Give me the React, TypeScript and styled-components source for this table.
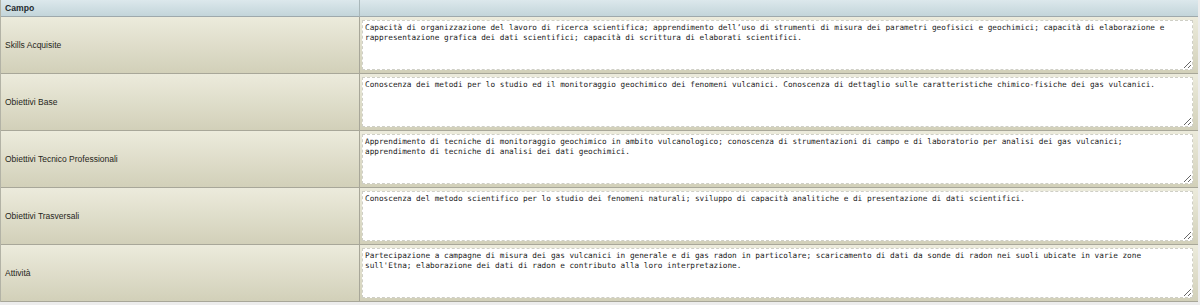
import styled, { createGlobalStyle } from "styled-components";

const GlobalStyle = createGlobalStyle`
  html, body {
    margin: 0;
    padding: 0;
    background: #ededed;
  }
`;

const righe = [
  {
    campo: "Skills Acquisite",
    testo:
      "Capacità di organizzazione del lavoro di ricerca scientifica; apprendimento dell’uso di strumenti di misura dei parametri geofisici e geochimici; capacità di elaborazione e rappresentazione grafica dei dati scientifici; capacità di scrittura di elaborati scientifici.",
  },
  {
    campo: "Obiettivi Base",
    testo:
      "Conoscenza dei metodi per lo studio ed il monitoraggio geochimico dei fenomeni vulcanici. Conoscenza di dettaglio sulle caratteristiche chimico-fisiche dei gas vulcanici.",
  },
  {
    campo: "Obiettivi Tecnico Professionali",
    testo:
      "Apprendimento di tecniche di monitoraggio geochimico in ambito vulcanologico; conoscenza di strumentazioni di campo e di laboratorio per analisi dei gas vulcanici; apprendimento di tecniche di analisi dei dati geochimici.",
  },
  {
    campo: "Obiettivi Trasversali",
    testo:
      "Conoscenza del metodo scientifico per lo studio dei fenomeni naturali; sviluppo di capacità analitiche e di presentazione di dati scientifici.",
  },
  {
    campo: "Attività",
    testo:
      "Partecipazione a campagne di misura dei gas vulcanici in generale e di gas radon in particolare; scaricamento di dati da sonde di radon nei suoli ubicate in varie zone sull'Etna; elaborazione dei dati di radon e contributo alla loro interpretazione.",
  },
];

const App: React.FC = () => {
  return (
    <>
      <GlobalStyle />
      <Tabella>
        <Intestazione>Campo</Intestazione>
        <Intestazione />
        {righe.map((r) => (
          <Riga key={r.campo}>
            <Etichetta>{r.campo}</Etichetta>
            <Valore>
              <Testo defaultValue={r.testo} spellCheck={false} />
            </Valore>
          </Riga>
        ))}
      </Tabella>
    </>
  );
};
export default App;

const Tabella = styled.div`
  display: grid;
  grid-template-columns: 359px 838px;
  width: 1198px;
  border-left: 1px solid #b3b3a6;
  border-right: 1px solid #b3b3a6;
  box-sizing: border-box;
  font-family: "Liberation Sans", Arial, sans-serif;
`;

const Intestazione = styled.div`
  height: 16px;
  line-height: 16px;
  padding-left: 4px;
  font-size: 8.6px;
  font-weight: bold;
  color: #1e2a2e;
  background: linear-gradient(#dce8ec, #c3d5da);
  border-bottom: 1px solid #9ea9ac;
  &:first-child {
    border-right: 1px solid #a9b7ba;
  }
`;

const Riga = styled.div`
  display: contents;
`;

const Cella = styled.div`
  background: linear-gradient(#ecebdc, #d2d0b9);
  border-bottom: 1px solid #a8a799;
`;

const Etichetta = styled(Cella)`
  display: flex;
  align-items: center;
  padding-left: 4px;
  font-size: 8.5px;
  color: #262620;
  border-right: 1px solid #a8a799;
`;

const Valore = styled(Cella)`
  padding: 3px 5px 3px 2px;
`;

const Testo = styled.textarea`
  display: block;
  width: 100%;
  height: 50px;
  box-sizing: border-box;
  margin: 0;
  padding: 2px 14px 2px 2px;
  border: 1px dashed #cfcfc6;
  background: #ffffff;
  font-family: "DejaVu Sans Mono", "Liberation Mono", monospace;
  font-size: 7.72px;
  line-height: 10px;
  color: #232323;
  resize: vertical;
  outline: none;
`;
